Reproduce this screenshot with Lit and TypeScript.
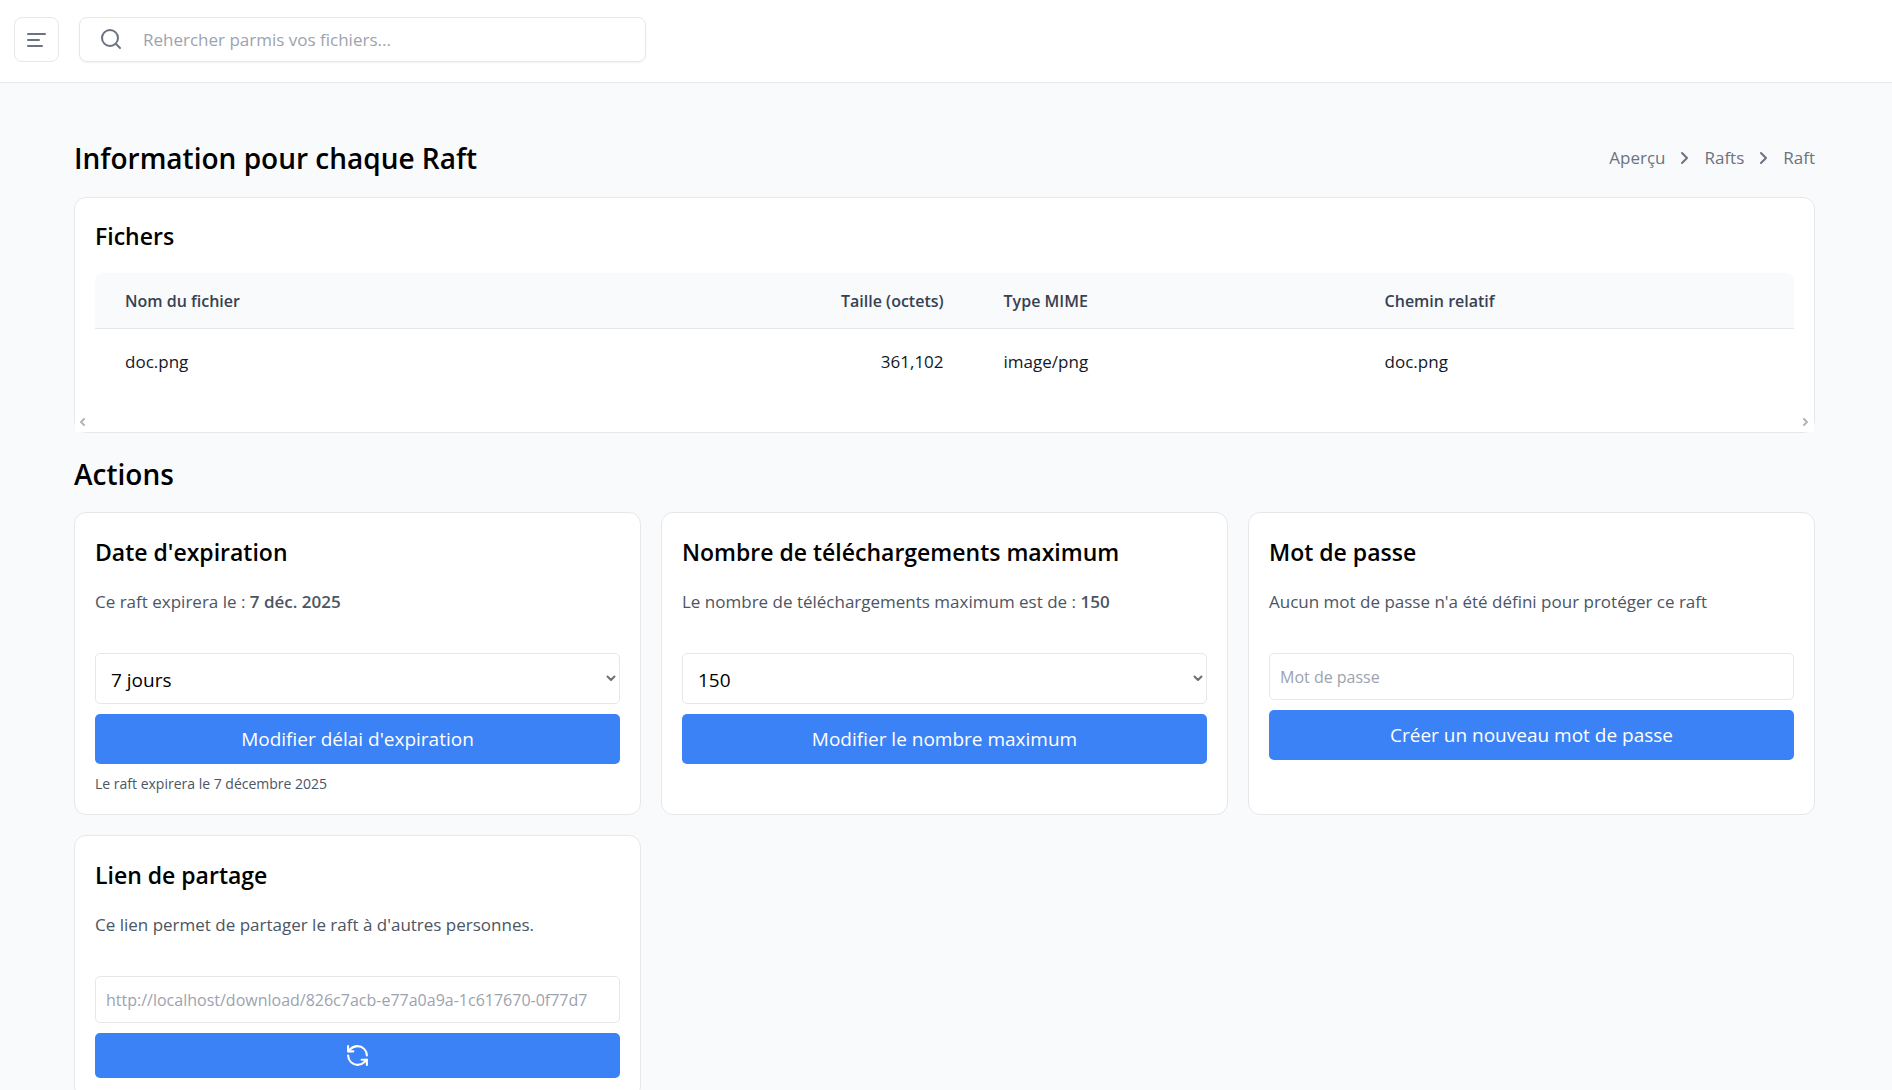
import { LitElement, html, css } from "lit";
import { customElement, property } from "lit/decorators.js";

const palette = css`
  :host {
    --line: #e5e7eb;
    --surface: #ffffff;
    --page: #f9fafc;
    --accent: #3b82f6;
    --ink: #000000;
    --body: #4b5563;
    --muted: #6b7280;
    --faint: #9ca3af;
    font-family: "Open Sans", "Noto Sans", sans-serif;
    font-size: 17px;
    line-height: 28px;
    color: var(--body);
  }
  *,
  *::before,
  *::after {
    box-sizing: border-box;
  }
  h1,
  h2,
  h3,
  p {
    margin: 0;
  }
  svg {
    display: block;
    fill: none;
    stroke: currentColor;
    stroke-width: 2;
    stroke-linecap: round;
    stroke-linejoin: round;
  }
`;

@customElement("top-bar")
class TopBar extends LitElement {
  static styles = [
    palette,
    css`
      :host {
        display: flex;
        gap: 20px;
        padding: 17px 14px 20px;
        background: var(--surface);
        border-bottom: 1px solid var(--line);
      }
      .menu {
        display: grid;
        place-items: center;
        width: 45px;
        height: 45px;
        padding: 0;
        color: var(--muted);
        background: var(--surface);
        border: 1px solid var(--line);
        border-radius: 8px;
      }
      .search {
        display: flex;
        align-items: center;
        gap: 20px;
        flex: 0 1 567px;
        height: 45px;
        padding: 0 20px;
        color: var(--muted);
        border: 1px solid var(--line);
        border-radius: 8px;
        box-shadow: 0 1px 2px rgba(0, 0, 0, 0.06);
      }
      .query {
        flex: 1;
        min-width: 0;
        padding: 0;
        font: inherit;
        color: var(--ink);
        background: none;
        border: 0;
        outline: 0;
      }
      .query::placeholder {
        color: var(--faint);
        opacity: 1;
      }
    `,
  ];

  render() {
    return html`
      <button class="menu" type="button" aria-label="Menu">
        <svg width="19" height="16" viewBox="0 0 19 16">
          <path d="M1 2h17M1 8h11M1 14h14" />
        </svg>
      </button>
      <label class="search">
        <svg width="23" height="23" viewBox="0 0 23 23">
          <circle cx="10" cy="10" r="8" />
          <path d="M16 16l4 4" />
        </svg>
        <input class="query" type="search" aria-label="Rechercher" placeholder="Rehercher parmis vos fichiers..." />
      </label>
    `;
  }
}

interface RaftFile {
  name: string;
  size: number;
  mime: string;
  path: string;
}

@customElement("file-panel")
class FilePanel extends LitElement {
  @property({ attribute: false }) files: RaftFile[] = [];

  static styles = [
    palette,
    css`
      :host {
        display: block;
        background: var(--surface);
        border: 1px solid var(--line);
        border-radius: 12px;
      }
      .content {
        padding: 19px 20px 20px;
      }
      .title {
        font-size: 23px;
        line-height: 38px;
        font-weight: 600;
        color: var(--ink);
      }
      .files {
        width: 100%;
        margin-top: 18px;
        table-layout: fixed;
        border-collapse: separate;
        border-spacing: 0;
      }
      .name {
        width: 42%;
      }
      .size {
        width: 165px;
      }
      .mime {
        width: 381px;
      }
      th,
      td {
        padding: 15px 30px 13px;
        text-align: left;
        white-space: nowrap;
      }
      th {
        line-height: 27px;
        font-size: 16px;
        font-weight: 600;
        color: #374151;
        background: var(--page);
        border-bottom: 1px solid var(--line);
      }
      th:first-child {
        border-top-left-radius: 8px;
      }
      th:last-child {
        border-top-right-radius: 8px;
      }
      td {
        padding: 20px 30px;
        line-height: 26px;
        color: #111827;
      }
      th.number,
      td.number {
        text-align: right;
      }
      .track {
        display: flex;
        justify-content: space-between;
        padding: 3px 5px 6px 4px;
        color: #b4b4b4;
        background: var(--surface);
      }
    `,
  ];

  render() {
    return html`
      <div class="content">
        <h2 class="title">Fichers</h2>
        <table class="files">
          <colgroup>
            <col class="name" />
            <col class="size" />
            <col class="mime" />
            <col />
          </colgroup>
          <thead>
            <tr>
              <th scope="col">Nom du fichier</th>
              <th scope="col" class="number">Taille (octets)</th>
              <th scope="col">Type MIME</th>
              <th scope="col">Chemin relatif</th>
            </tr>
          </thead>
          <tbody>
            ${this.files.map(
              (file) => html`<tr>
                <td>${file.name}</td>
                <td class="number">${file.size.toLocaleString("en-US")}</td>
                <td>${file.mime}</td>
                <td>${file.path}</td>
              </tr>`
            )}
          </tbody>
        </table>
      </div>
      <div class="track" aria-hidden="true">
        <svg width="8" height="8" viewBox="0 0 8 8"><path d="M5 1L2 4l3 3" /></svg>
        <svg width="8" height="8" viewBox="0 0 8 8"><path d="M3 1l3 3-3 3" /></svg>
      </div>
    `;
  }
}

@customElement("action-card")
class ActionCard extends LitElement {
  @property() heading = "";

  static styles = [
    palette,
    css`
      :host {
        display: flex;
        flex-direction: column;
        min-width: 0;
        padding: 20px;
        background: var(--surface);
        border: 1px solid var(--line);
        border-radius: 12px;
      }
      .title {
        font-size: 23px;
        line-height: 38px;
        font-weight: 600;
        color: var(--ink);
      }
      .summary {
        margin: 17px 0 37px;
      }
      .controls {
        display: flex;
        flex-direction: column;
        gap: 10px;
      }
    `,
  ];

  render() {
    return html`
      <h3 class="title">${this.heading}</h3>
      <p class="summary"><slot name="summary"></slot></p>
      <div class="controls"><slot></slot></div>
    `;
  }
}

@customElement("app-root")
class AppRoot extends LitElement {
  private files: RaftFile[] = [{ name: "doc.png", size: 361102, mime: "image/png", path: "doc.png" }];

  static styles = [
    palette,
    css`
      :host {
        display: block;
        min-height: 100vh;
        background: var(--page);
      }
      .page {
        padding: 55px 77px 20px 74px;
      }
      .heading {
        display: flex;
        align-items: center;
        justify-content: space-between;
        padding-bottom: 19px;
      }
      .title {
        font-size: 28px;
        line-height: 40px;
        font-weight: 600;
        color: var(--ink);
      }
      .trail {
        display: flex;
        align-items: center;
        gap: 15px;
        color: var(--muted);
      }
      .trail a {
        color: inherit;
        text-decoration: none;
      }
      .section {
        margin: 21px 0 18px;
      }
      .actions {
        display: grid;
        grid-template-columns: repeat(3, minmax(0, 1fr));
        gap: 20px;
      }
      .picker {
        position: relative;
        display: block;
        color: #6f6f6f;
      }
      .arrow {
        position: absolute;
        top: 22px;
        right: 4px;
        pointer-events: none;
      }
      .choice,
      .field,
      .submit {
        display: block;
        width: 100%;
        margin: 0;
        font: inherit;
        border-radius: 5px;
      }
      .choice {
        height: 51px;
        padding: 2px 15px 0;
        font-size: 19px;
        color: var(--ink);
        background: var(--surface);
        border: 1px solid var(--line);
        appearance: none;
      }
      .field {
        height: 47px;
        padding: 0 10px;
        font-size: 16px;
        color: var(--faint);
        background: var(--surface);
        border: 1px solid var(--line);
      }
      .field::placeholder {
        color: var(--faint);
        opacity: 1;
      }
      .submit {
        padding: 10px;
        font-size: 19px;
        line-height: 30px;
        color: #ffffff;
        background: var(--accent);
        border: 0;
      }
      .icon {
        display: grid;
        place-items: center;
      }
      .note {
        font-size: 14px;
        line-height: 20px;
      }
      strong {
        font-weight: 600;
      }
    `,
  ];

  private arrow() {
    return html`<svg class="arrow" width="10" height="7" viewBox="0 0 10 7"><path d="M1.5 1.5L5 5l3.500-3.500" /></svg>`;
  }

  private chevron() {
    return html`<svg width="9" height="14" viewBox="0 0 9 14" aria-hidden="true"><path d="M2 2l5 5-5 5" /></svg>`;
  }

  render() {
    return html`
      <top-bar></top-bar>
      <main class="page">
        <div class="heading">
          <h1 class="title">Information pour chaque Raft</h1>
          <nav class="trail" aria-label="Fil d'Ariane">
            <a href="#apercu">Aperçu</a>${this.chevron()}<a href="#rafts">Rafts</a>${this.chevron()}<a href="#raft">Raft</a>
          </nav>
        </div>
        <file-panel .files=${this.files}></file-panel>
        <h2 class="title section">Actions</h2>
        <div class="actions">
          <action-card heading="Date d'expiration">
            <span slot="summary">Ce raft expirera le : <strong>7 déc. 2025</strong></span>
            <label class="picker">
              <select class="choice" aria-label="Délai d'expiration">
                <option>7 jours</option>
              </select>
              ${this.arrow()}
            </label>
            <button class="submit" type="button">Modifier délai d'expiration</button>
            <p class="note">Le raft expirera le 7 décembre 2025</p>
          </action-card>
          <action-card heading="Nombre de téléchargements maximum">
            <span slot="summary">Le nombre de téléchargements maximum est de : <strong>150</strong></span>
            <label class="picker">
              <select class="choice" aria-label="Nombre maximum">
                <option>150</option>
              </select>
              ${this.arrow()}
            </label>
            <button class="submit" type="button">Modifier le nombre maximum</button>
          </action-card>
          <action-card heading="Mot de passe">
            <span slot="summary">Aucun mot de passe n'a été défini pour protéger ce raft</span>
            <input class="field" type="password" aria-label="Mot de passe" placeholder="Mot de passe" />
            <button class="submit" type="button">Créer un nouveau mot de passe</button>
          </action-card>
          <action-card heading="Lien de partage">
            <span slot="summary">Ce lien permet de partager le raft à d'autres personnes.</span>
            <input
              class="field"
              type="text"
              aria-label="Lien de partage"
              readonly
              .value=${"http://localhost/download/826c7acb-e77a0a9a-1c617670-0f77d7"}
            />
            <button class="submit icon" type="button" aria-label="Renouveler le lien">
              <svg width="25" height="25" viewBox="0 0 24 24">
                <path d="M21 12a9 9 0 0 0-9-9 9.750 9.750 0 0 0-6.740 2.740L3 8" />
                <path d="M3 3v5h5" />
                <path d="M3 12a9 9 0 0 0 9 9 9.750 9.750 0 0 0 6.740-2.740L21 16" />
                <path d="M16 16h5v5" />
              </svg>
            </button>
          </action-card>
        </div>
      </main>
    `;
  }
}
